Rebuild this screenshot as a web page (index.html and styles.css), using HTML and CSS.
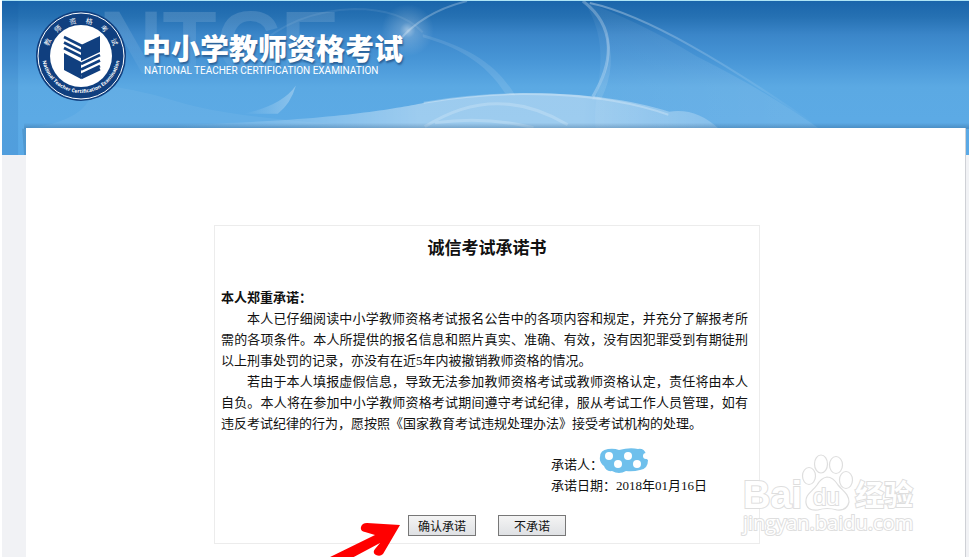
FILE: index.html
```html
<!DOCTYPE html>
<html lang="zh-CN">
<head>
<meta charset="utf-8">
<title>中小学教师资格考试</title>
<link rel="stylesheet" href="styles.css">
</head>
<body>
<div class="page">
  <header class="banner">
    <svg class="banner-art" viewBox="0 0 967 153" preserveAspectRatio="xMinYMin slice" aria-hidden="true">
      <defs>
        <linearGradient id="fade" x1="0" y1="0" x2="0" y2="1">
          <stop offset="0" stop-color="#fff" stop-opacity=".17"/>
          <stop offset=".9" stop-color="#fff" stop-opacity=".02"/>
        </linearGradient>
        <linearGradient id="hill" x1="0" y1="0" x2="1" y2="0">
          <stop offset="0" stop-color="#fff" stop-opacity="0"/>
          <stop offset=".45" stop-color="#fff" stop-opacity=".4"/>
          <stop offset=".75" stop-color="#fff" stop-opacity=".4"/>
          <stop offset="1" stop-color="#fff" stop-opacity=".2"/>
        </linearGradient>
        <linearGradient id="veil" x1="0" y1="0" x2="1" y2="0">
          <stop offset="0" stop-color="#fff" stop-opacity=".05"/>
          <stop offset="1" stop-color="#fff" stop-opacity=".1"/>
        </linearGradient>
        <linearGradient id="streak" x1="0" y1="0" x2="1" y2="0">
          <stop offset="0" stop-color="#fff" stop-opacity=".35"/>
          <stop offset="1" stop-color="#fff" stop-opacity="0"/>
        </linearGradient>
        <linearGradient id="curl" x1="0" y1="0" x2="1" y2="0">
          <stop offset="0" stop-color="#fff" stop-opacity="0"/>
          <stop offset="1" stop-color="#fff" stop-opacity=".3"/>
        </linearGradient>
        <linearGradient id="shade" x1="0" y1="0" x2="0" y2="1">
          <stop offset="0" stop-color="#24507a" stop-opacity="0"/>
          <stop offset="1" stop-color="#24507a" stop-opacity=".35"/>
        </linearGradient>
        <radialGradient id="flare">
          <stop offset="0" stop-color="#fff" stop-opacity=".5"/>
          <stop offset=".3" stop-color="#fff" stop-opacity=".2"/>
          <stop offset="1" stop-color="#fff" stop-opacity="0"/>
        </radialGradient>
      </defs>
      <rect width="16" height="153" fill="#0d5499" opacity=".12"/>
      <text class="banner-ghost" x="96" y="72" fill="url(#fade)">NTCE</text>
      <path d="M90 83Q130 86 175 100T330 122L200 127H20Q90 120 90 83Z" fill="#fff" opacity=".05"/>
      <path d="M418 33C460 45 490 60 510 94L500 92C480 60 450 45 418 36Z" fill="#fff" opacity=".1"/>
      <path d="M578 0C610 12 650 30 690 55Q760 90 812 127H590C585 90 610 50 578 0Z" fill="url(#veil)"/>
      <path d="M584 2C640 14 720 62 812 126" fill="none" stroke="url(#streak)" stroke-width="2"/>
      <path d="M577 0C610 25 608 60 587 95" fill="none" stroke="#fff" stroke-opacity=".25" stroke-width="3"/>
      <path d="M600 30Q612 64 595 98H586C600 80 604 60 600 30Z" fill="#fff" opacity=".1"/>
      <path d="M250 48Q290 10 350 8Q396 8 418 31" fill="none" stroke="#fff" stroke-opacity=".08" stroke-width="2"/>
      <path d="M394 40Q418 11 462 0" fill="none" stroke="#fff" stroke-opacity=".25" stroke-width="2"/>
      <path d="M240 112Q278 104 292 84Q287 102 274 112Z" fill="url(#curl)"/>
      <path d="M170 123C330 119 390 107 425 100C510 86 600 90 663 110Q690 106 712 127H170Z" fill="url(#hill)"/>
      <path d="M419 101C505 86 600 91 662 113" fill="none" stroke="#fff" stroke-opacity=".25" stroke-width="2"/>
      <path d="M420 125Q490 80 562 123M430 121Q480 114 528 126" fill="none" stroke="#fff" stroke-opacity=".2" stroke-width="3"/>
      <circle cx="403" cy="29" r="26" fill="url(#flare)"/>
      <rect x="22" y="121" width="945" height="6" fill="url(#shade)"/>
      <path d="M20 127H24V153H22Z" fill="#24507a" opacity=".2"/>
    </svg>
    <svg class="emblem" viewBox="0 0 92 92" role="img" aria-label="教师资格考试">
      <defs>
        <path id="arc-top" d="M12 46A34 34 0 0 1 80 46"/>
        <path id="arc-bottom" d="M7 43A39 39 0 1 0 85 43"/>
      </defs>
      <circle cx="46" cy="45" r="45" fill="#103f7f"/>
      <circle cx="46" cy="45" r="43" fill="none" stroke="#fff" stroke-width="1"/>
      <circle cx="46" cy="45" r="31" fill="#fff"/>
      <text class="emblem-cn"><textPath href="#arc-top" startOffset="50%">教　 师　 资　 格　 考　 试</textPath></text>
      <text class="emblem-en"><textPath href="#arc-bottom" startOffset="50%">National Teacher Certification Examination</textPath></text>
      <g fill="#103f7f">
        <path d="M46 34L65 25V41L46 50Z"/>
        <path d="M29 42L46 51V68L29 59Z"/>
      </g>
      <path d="M29 26L47 35M29 31.500L47 40.500M29 37L47 46M65 44L46 53M65 49.500L46 58.500M65 55L46 64M65 58L46 67" fill="none" stroke="#103f7f" stroke-width="2.600"/>
    </svg>
    <div class="brand">
      <h1 class="brand-title">中小学教师资格考试</h1>
      <p class="brand-sub">NATIONAL TEACHER CERTIFICATION EXAMINATION</p>
    </div>
  </header>

  <main class="sheet">
    <section class="pledge">
      <h2 class="pledge-title">诚信考试承诺书</h2>
      <div class="pledge-text">
        <p class="lead">本人郑重承诺：</p>
        <p class="para">本人已仔细阅读中小学教师资格考试报名公告中的各项内容和规定，并充分了解报考所需的各项条件。本人所提供的报名信息和照片真实、准确、有效，没有因犯罪受到有期徒刑以上刑事处罚的记录，亦没有在近<span class="num">5</span>年内被撤销教师资格的情况。</p>
        <p class="para">若由于本人填报虚假信息，导致无法参加教师资格考试或教师资格认定，责任将由本人自负。本人将在参加中小学教师资格考试期间遵守考试纪律，服从考试工作人员管理，如有违反考试纪律的行为，愿按照《国家教育考试违规处理办法》接受考试机构的处理。</p>
      </div>
      <div class="signature">
        <p class="signer">承诺人：<svg class="redaction" viewBox="0 0 50 26" aria-hidden="true">
          <path d="M1 9Q1 2 9 1Q15 0 20 2Q31-1 39 1Q45 0 47 6Q44 9 49 12Q49 21 41 22Q34 24 27 23Q20 27 13 23Q7 24 5 18Q0 14 1 9Z" fill="#6fc0ec"/>
          <g fill="#fff"><circle cx="10" cy="8" r="4"/><circle cx="29" cy="8" r="4"/><circle cx="19" cy="16" r="4"/><circle cx="38" cy="16" r="4"/><circle cx="47" cy="8" r="3"/></g>
        </svg></p>
        <p>承诺日期：<span class="num">2018</span>年<span class="num">01</span>月<span class="num">16</span>日</p>
      </div>
      <div class="actions">
        <button type="button" class="btn">确认承诺</button>
        <button type="button" class="btn">不承诺</button>
      </div>
      <svg class="pointer" viewBox="0 0 76 36" aria-hidden="true">
        <path d="M0 36L49 12L39 9Q34 8 35 4Q36 0 41 0L74 2L57 31Q54 34 50 32Q46 30 49 26L54 20L24 36Z" fill="#f00"/>
      </svg>
    </section>
    <svg class="watermark" viewBox="0 0 176 86" aria-hidden="true">
      <g fill="#fff" stroke="#dedede" stroke-width="1.200">
        <ellipse cx="67" cy="26" rx="6.500" ry="8.500"/><ellipse cx="79" cy="14" rx="6.500" ry="9"/><ellipse cx="94" cy="15" rx="6.500" ry="8.500"/><ellipse cx="104" cy="30" rx="6.500" ry="8.500"/>
        <path d="M85 27Q91 27 96 35C101 41 107 44 107 52Q105 61 95 60Q85 57 76 60Q65 61 64 53C63 44 70 42 75 35Q79 28 85 27Z"/>
        <g paint-order="stroke" stroke-width="2">
          <text class="wm-bai" x="1" y="58">Bai</text>
          <text class="wm-du" x="71" y="55">du</text>
          <text class="wm-cn" x="113" y="56">经验</text>
          <text class="wm-url" x="1" y="80">jingyan.baidu.com</text>
        </g>
      </g>
    </svg>
  </main>
</div>
</body>
</html>
```

FILE: styles.css
```css
* {
  box-sizing: border-box;
}

body {
  margin: 0;
  background: #fff;
  color: #111;
  font-family: "Liberation Sans", "Noto Sans CJK SC", sans-serif;
}

h1, h2, p {
  margin: 0;
}

.page {
  display: flex;
  flex-direction: column;
  min-height: 100vh;
  margin-left: 2px;
  background: #f1f2f5;
}

/* Banner */
.banner {
  position: relative;
  display: flex;
  align-items: flex-start;
  height: 155px;
  padding: 10px 0 0 33px;
  border-top: 1px solid #aee4f5;
  background: linear-gradient(#1a65ab 0, #2671b3 16px, #3b86c9 34px, #4795d6 58px, #5ba9e3 86px, #5caae5 120px, #5aa9e6 154px);
  overflow: hidden;
}

.banner-art {
  position: absolute;
  top: 0;
  left: 0;
  width: 100%;
  height: 154px;
}

.banner-ghost {
  font: bold 88px "Liberation Sans", sans-serif;
}

.emblem {
  position: relative;
  width: 92px;
  height: 92px;
}

.emblem-cn {
  fill: #fff;
  font: 7px "Noto Sans CJK SC", sans-serif;
  text-anchor: middle;
}

.emblem-en {
  fill: #fff;
  font: bold 5px "Open Sans", sans-serif;
  text-anchor: middle;
}

.brand {
  position: relative;
  padding: 18px 0 0 15px;
  color: #fff;
}

.brand-title {
  font: 900 29px/36px "Noto Sans CJK SC", sans-serif;
  text-shadow: 1px 2px 2px #2a5f96;
}

.brand-sub {
  padding-left: 2px;
  font-family: Roboto, sans-serif;
  font-size: 10px;
  line-height: 12px;
}

/* Content sheet */
.sheet {
  position: relative;
  flex: 1;
  margin: -27px 3px 0 24px;
  padding: 97px 17px 14px 0;
  border-right: 1px solid #cfd1d6;
  background: #fff;
  overflow: hidden;
}

.pledge {
  position: relative;
  max-width: 546px;
  margin: 0 auto;
  padding: 9px 0 7px;
  border: 1px solid #ececec;
  font-family: "Noto Sans CJK SC", sans-serif;
  font-size: 13px;
  line-height: 21px;
}

.pledge-title {
  font-size: 17px;
  line-height: 24px;
  text-align: center;
}

.pledge-text {
  padding: 27px 11px 0 6px;
}

.lead {
  font-weight: bold;
}

.para {
  text-align: justify;
  text-indent: 2em;
}

.num {
  font-family: "Liberation Serif", serif;
  line-height: 1;
}

.signature {
  padding: 20px 0 0 336px;
}

.signer {
  display: flex;
  height: 21px;
}

.redaction {
  width: 50px;
  height: 26px;
  margin: -5px 0 0 -4px;
}

.actions {
  display: flex;
  justify-content: center;
  gap: 22px;
  padding-top: 20px;
}

.btn {
  width: 68px;
  height: 21px;
  padding: 0;
  border: 1px solid #777;
  background: linear-gradient(#f4f4f4, #dfe1e4);
  color: #111;
  font: 12px/18px "Noto Sans CJK SC", sans-serif;
}

.pointer {
  position: absolute;
  bottom: -16px;
  left: 111px;
  width: 76px;
  height: 36px;
}

.watermark {
  position: absolute;
  right: 47px;
  bottom: 22px;
  width: 176px;
  height: 86px;
  overflow: visible;
}

.wm-bai {
  font: bold 38px "Liberation Sans", sans-serif;
}

.wm-du {
  font: 24px "Liberation Sans", sans-serif;
}

.wm-cn {
  font: bold 29px "Noto Sans CJK SC", sans-serif;
}

.wm-url {
  font: 20px "Open Sans", sans-serif;
}
```
